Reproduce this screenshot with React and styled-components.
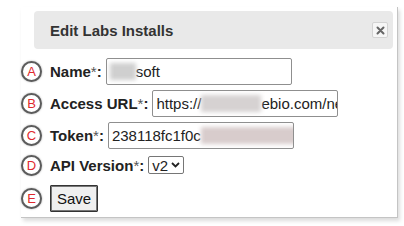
import React from "react";
import styled, { createGlobalStyle } from "styled-components";

const Global = createGlobalStyle`
  html, body { margin: 0; padding: 0; background: #fff; }
  body { font-family: "Liberation Sans", Arial, sans-serif; }
`;

const Page = styled.div`
  width: 404px;
  height: 226px;
  padding: 7px 0 0 21px;
  box-sizing: border-box;
  overflow: hidden;
`;

const Dialog = styled.div`
  width: 377px;
  height: 211px;
  box-sizing: border-box;
  background: #fff;
  border-right: 1px solid #c4c4c4;
  border-bottom: 1px solid #c4c4c4;
  box-shadow: 2px 3px 4px rgba(0, 0, 0, 0.14);
  padding: 4px 4px 0 13px;
  display: flex;
  flex-direction: column;
`;

const TitleBar = styled.div`
  height: 38px;
  background: #e9e9e9;
  border-radius: 4px;
  display: flex;
  align-items: center;
  justify-content: space-between;
  padding: 0 5px 0 16px;
`;

const Title = styled.span`
  font-size: 15px;
  font-weight: bold;
  color: #333;
`;

const CloseButton = styled.div`
  width: 16px;
  height: 16px;
  box-sizing: border-box;
  background: #f6f6f6;
  border: 1px solid #d3d3d3;
  border-radius: 2px;
  display: flex;
  align-items: center;
  justify-content: center;
`;

const Form = styled.div`
  display: flex;
  flex-direction: column;
  margin-left: -13px;
  padding-top: 8px;
  gap: 4px;
`;

const Row = styled.div`
  display: flex;
  align-items: center;
  height: ${(p) => p.$h || 28}px;
  margin-top: ${(p) => p.$mt || 0}px;
`;

const Marker = styled.div`
  width: 21px;
  height: 21px;
  box-sizing: border-box;
  border: 2px solid #5c5c5c;
  border-radius: 50%;
  background: #fff;
  box-shadow: 0 0 2px rgba(0, 0, 0, 0.35);
  color: #e0282e;
  font-size: 13px;
  display: flex;
  align-items: center;
  justify-content: center;
  margin-right: 8px;
  flex: none;
`;

const Label = styled.span`
  font-size: 15px;
  font-weight: bold;
  color: #222;
  margin-right: 4px;
  white-space: nowrap;
`;

const Star = styled.span`
  font-weight: normal;
  color: #555;
`;

const Field = styled.div`
  width: 186px;
  height: 27px;
  box-sizing: border-box;
  border: 1px solid #8f8f8f;
  border-radius: 2px;
  padding: 0 3px;
  font-size: 15px;
  color: #222;
  display: flex;
  align-items: center;
  white-space: nowrap;
  overflow: hidden;
`;

const Redact = styled.span`
  display: inline-block;
  width: ${(p) => p.$w}px;
  height: 17px;
  background: ${(p) => p.$c || "#cfcfcf"};
  filter: blur(2px);
  flex: none;
`;

const Select = styled.div`
  height: 18px;
  box-sizing: border-box;
  border: 1px solid #767676;
  border-radius: 2px;
  padding: 0 3px 0 3px;
  font-size: 15px;
  color: #222;
  display: flex;
  align-items: center;
  gap: 3px;
`;

const Button = styled.div`
  width: 48px;
  height: 27px;
  box-sizing: border-box;
  border: 1px solid #333;
  box-shadow: inset 0 0 0 1px #777;
  border-radius: 1px;
  background: #efefef;
  font-size: 15px;
  color: #111;
  display: flex;
  align-items: center;
  justify-content: center;
`;

export default function App() {
  return (
    <>
      <Global />
      <Page>
        <Dialog>
          <TitleBar>
            <Title>Edit Labs Installs</Title>
            <CloseButton>
              <svg width="9" height="9" viewBox="0 0 9 9">
                <path d="M1.5 1.5 L7.5 7.5 M7.5 1.5 L1.5 7.5" stroke="#666" strokeWidth="2" strokeLinecap="round" />
              </svg>
            </CloseButton>
          </TitleBar>
          <Form>
            <Row>
              <Marker>A</Marker>
              <Label>Name<Star>*</Star>:</Label>
              <Field>
                <Redact $w={26} />soft
              </Field>
            </Row>
            <Row>
              <Marker>B</Marker>
              <Label>Access URL<Star>*</Star>:</Label>
              <Field>
                https://<Redact $w={60} $c="#d6d2d2" />ebio.com/ne
              </Field>
            </Row>
            <Row>
              <Marker>C</Marker>
              <Label>Token<Star>*</Star>:</Label>
              <Field>
                238118fc1f0c<Redact $w={100} $c="#d8cccc" />
              </Field>
            </Row>
            <Row $h={24}>
              <Marker>D</Marker>
              <Label>API Version<Star>*</Star>:</Label>
              <Select>
                v2
                <svg width="9" height="6" viewBox="0 0 9 6">
                  <path d="M1 1 L4.5 4.5 L8 1" stroke="#222" strokeWidth="1.8" fill="none" />
                </svg>
              </Select>
            </Row>
            <Row $h={27} $mt={4}>
              <Marker>E</Marker>
              <Button>Save</Button>
            </Row>
          </Form>
        </Dialog>
      </Page>
    </>
  );
}
